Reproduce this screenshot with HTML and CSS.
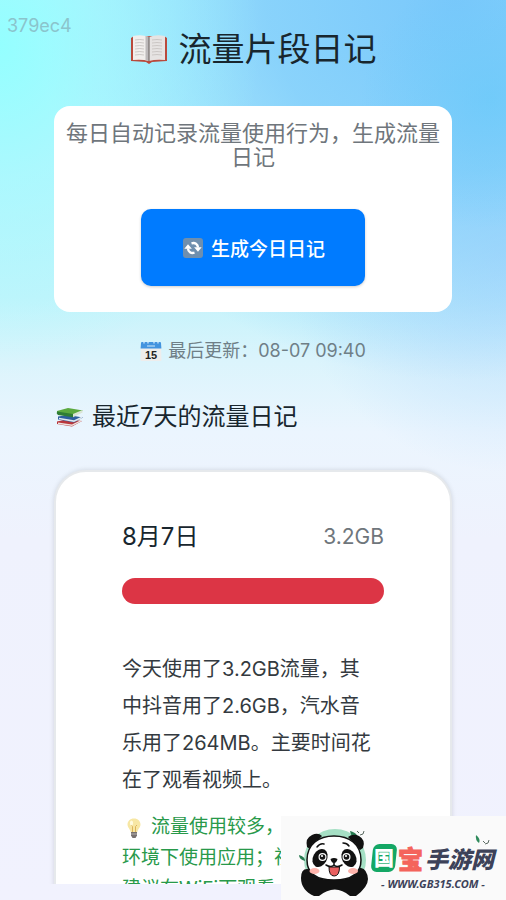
FILE: index.html
```html
<!DOCTYPE html>
<html lang="zh-CN">
<head>
<meta charset="utf-8">
<meta name="viewport" content="width=device-width, initial-scale=1">
<title>流量片段日记</title>
<link rel="stylesheet" href="styles.css">
</head>
<body>
<div class="app">
  <span class="build">379ec4</span>
  <main class="scroll">
    <h1 class="title">
      <svg class="icon-book" viewBox="0 0 38 30" aria-hidden="true">
        <path d="M1 4 4 2h30l3 2v23l-15 1-3 2-3-2-15-1z" fill="#b94a3c"/>
        <path d="M3 2q9-2 16 1v24q-7-2-16-1z" fill="#f1eeec"/>
        <path d="M35 2q-9-2-16 1v24q7-2 16-1z" fill="#e6e3e2"/>
        <path d="M15.500 2 19 3v24l-3.500-.8z" fill="#bdb9ba"/>
        <path d="M19 3v24" stroke="#77706f" stroke-width="1.200"/>
        <path d="M5 6q5-1 9 0M5 9q5-1 9 0M5 12q5-1 9 0M5 15q5-1 9 0M5 18q5-1 9 0M5 21q5-1 9 0M22 6q5-1 10 0M22 9q5-1 10 0M22 12q5-1 10 0M22 15q5-1 10 0M22 18q5-1 10 0M22 21q5-1 10 0" fill="none" stroke="#c4bfbd" stroke-width=".8"/>
      </svg>
      流量片段日记
    </h1>
    <section class="intro">
      <p class="intro-text">每日自动记录流量使用行为，生成流量日记</p>
      <button class="generate" type="button">
        <svg class="icon-small" viewBox="0 0 20 20" aria-hidden="true">
          <rect width="20" height="20" rx="3" fill="#6f8fae"/>
          <path d="M5 10.500C5.200 14 8 15.700 11.500 14.700M15 9.500C14.800 6 12 4.300 8.500 5.300" fill="none" stroke="#fff" stroke-width="2.400"/>
          <path d="M1.300 10.800 5 6.300l3.900 4.500zM18.700 9.200 15 13.700l-3.900-4.500z" fill="#fff"/>
        </svg>
        生成今日日记
      </button>
    </section>
    <p class="updated">
      <svg class="icon-calendar" viewBox="0 0 22 20" aria-hidden="true">
        <path d="M1 5h20l.5 14q0 1-1 1h-19q-1 0-1-1z" fill="#eeedec"/>
        <path d="M1 2q0-1 1-1h18q1 0 1 1l.4 5.500H.6z" fill="#4394df"/>
        <path d="M4 0v2.500M8 0v2.500M14 0v2.500M18 0v2.500" stroke="#d9efff" stroke-width="1.200"/>
        <path d="M7 5h8" stroke="#a9d2f3" stroke-width="1.400"/>
        <text x="11" y="17.500" text-anchor="middle" class="calendar-day">15</text>
      </svg>
      最后更新：08-07 09:40
    </p>
    <h2 class="section-title">
      <svg class="icon-books" viewBox="0 0 28 20" aria-hidden="true">
        <path d="M1 14.500 12 12l14 2-10 5.500L1 17z" fill="#b8373d"/>
        <path d="m2 15.500 14 2 9-4.500v1.500l-9 4.500-14-2z" fill="#eee4df"/>
        <path d="M2 9.500 12 8l15 2.500-9 5L2 12.500z" fill="#2d5f9e"/>
        <path d="m3 10.800 15 2.500 8-3.800v1.700l-8 3.800-15-2.700z" fill="#dfe8ef"/>
        <path d="M1 4 12 1l15 2.500-10 5.300L1 6.500z" fill="#5ba93f"/>
        <path d="M1 4.500 17 7v3.300L2 8q-2-1.500-1-3.500z" fill="#2f7d35"/>
        <path d="m17 7 9.500-4v2.500L17 10.300z" fill="#dae4d4"/>
      </svg>
      最近7天的流量日记
    </h2>
    <article class="diary">
      <header class="diary-head">
        <h3 class="diary-date">8月7日</h3>
        <span class="diary-total">3.2GB</span>
      </header>
      <div class="usage" role="progressbar" aria-label="流量" aria-valuenow="100" aria-valuemin="0" aria-valuemax="100"><div class="usage-fill" style="width:100%"></div></div>
      <p class="diary-text">今天使用了3.2GB流量，其中抖音用了2.6GB，汽水音乐用了264MB。主要时间花在了观看视频上。</p>
      <p class="advice"><svg class="icon-bulb" viewBox="0 0 24 20" aria-hidden="true">
        <path d="M12 .5c-4 0-6.500 2.700-6.500 6 0 3 2.800 4.500 3.300 8h6.400c.5-3.500 3.300-5 3.300-8 0-3.300-2.500-6-6.500-6z" fill="#f7e7a4"/>
        <path d="M10.500 14V8.500L9 7m4.500 7V8.500L15 7" fill="none" stroke="#dcb45b"/>
        <ellipse cx="9.500" cy="5" rx="1.600" ry="2.500" fill="#fffbe0"/>
        <path d="M9 14h6v3.500L13.500 20h-3L9 17.500z" fill="#77716f"/>
        <path d="M9 16h6" stroke="#b7b2af"/>
      </svg>流量使用较多，建议在WiFi环境下使用应用；视频类应用建议在WiFi下观看</p>
    </article>
  </main>
  <aside class="brand">
    <svg class="panda" viewBox="0 0 70 70" aria-hidden="true">
      <circle cx="35" cy="34" r="31" fill="#a5dfc4"/>
      <path d="M5 35c-4-1-6-3-6-6 4 1 6 3 6 6zM59 14c-5-1-8-4-9-9 5 1 8 4 9 9z" fill="#277a50"/>
      <path d="M64 5q0 4-4 4M57 5l2 2" fill="none" stroke="#5b6b62"/>
      <path d="M7 21Q5 12 12 9q6-3 10 1L10 23zM63 22q3-8-4-12-6-3-11 1l12 13z" fill="#111"/>
      <path d="M1 52q0-9 6-9 5 0 7 5h41q1-7 6-6 6 1 7 11 0 8-12 17H14Q1 64 1 52z" fill="#111"/>
      <path d="M19 70q16-13 31 0z" fill="#fafafa"/>
      <path d="M7 34C7 18 19 10 34 10s27 8 27 24-12 20-27 20S7 50 7 34z" fill="#fff" stroke="#111" stroke-width="1.500"/>
      <path d="M17 21q3-4 7-3M43 17q4 0 6 3" fill="none" stroke="#111" stroke-width="1.500" stroke-linecap="round"/>
      <ellipse cx="20" cy="32" rx="7" ry="9.500" transform="rotate(28 20 32)" fill="#111"/>
      <ellipse cx="49" cy="32" rx="7" ry="9.500" transform="rotate(-28 49 32)" fill="#111"/>
      <circle cx="22.500" cy="31" r="4" fill="#fff"/><circle cx="46.500" cy="31" r="4" fill="#fff"/>
      <circle cx="22.500" cy="31" r="2.800" fill="#161616"/><circle cx="46.500" cy="31" r="2.800" fill="#161616"/>
      <circle cx="22" cy="30" r="1.100" fill="#fff"/><circle cx="46" cy="30" r="1.100" fill="#fff"/>
      <ellipse cx="14.500" cy="45" rx="5" ry="3" fill="#ffb4ac"/><ellipse cx="53" cy="45" rx="5" ry="3" fill="#ffb4ac"/>
      <path d="M30.500 33q3.500-2 7 0-1 4-3.500 4t-3.500-4z" fill="#111"/>
      <path d="M34 37v2M26 39q5 3 8 0 3 3 8 0" fill="none" stroke="#111" stroke-width="1.500" stroke-linecap="round"/>
      <path d="M29 41h10.500q0 9-5.300 9T29 41z" fill="#e95f5f" stroke="#111"/>
    </svg>
    <div class="brand-text">
      <svg class="leaves" viewBox="0 0 16 12" aria-hidden="true">
        <path d="M2 1q5 4 3 8Q1 6 2 1z" fill="#2e8a5b"/>
        <path d="M15 6q0 4-4 4M9 7l2 2" fill="none" stroke="#5b6b62"/>
      </svg>
      <strong class="brand-name"><span class="seal">国</span><span class="red">宝</span><span class="dark">手游网</span></strong>
      <span class="brand-url">- WWW.GB315.COM -</span>
    </div>
  </aside>
</div>
</body>
</html>
```
FILE: styles.css
```css
* { box-sizing: border-box; }

body, h1, h2, h3, p { margin: 0; font-weight: 400; }

body {
  font-family: Inter, "Noto Sans CJK SC", sans-serif;
  color: #18262e;
}

.app {
  position: relative;
  height: 100vh;
  padding-bottom: 16px;
  overflow: hidden;
  background:
    radial-gradient(ellipse 130px 130px at 97% 11%, #68c9f9aa 0%, #68c9f900 100%),
    radial-gradient(ellipse 260px 330px at 0% 5%, #94ffff 0%, #a0fcff99 40%, #b8f7ff00 100%),
    radial-gradient(ellipse 420px 380px at 90% 0%, #7ac8fb 0%, #7ecbfbcc 45%, #a8dcfd00 100%),
    radial-gradient(ellipse 220px 220px at 100% 28%, #b4dafdcc 0%, #c3dffc00 100%),
    linear-gradient(#b2f1fd 0%, #c4f3fb 33%, #dbf4fc 40%, #ebf5fe 48%, #eff2fd 60%, #f1f2fe 100%);
}

.build {
  position: absolute;
  top: 12px;
  left: 7px;
  font-size: 18px;
  line-height: 28px;
  color: #8bc4cc;
}

.scroll {
  height: 100%;
  padding: 25px 54px 0;
  overflow: hidden;
}

.title {
  display: flex;
  align-items: center;
  justify-content: center;
  gap: 11px;
  font-size: 33px;
  line-height: 48px;
}

.icon-book { width: 38px; height: 30px; }

.intro {
  display: flex;
  flex-direction: column;
  align-items: center;
  margin-top: 33px;
  padding: 15px 10px 26px;
  border-radius: 16px;
  background: #fff;
}

.intro-text {
  font-size: 22px;
  line-height: 24px;
  text-align: center;
  color: #6f767c;
}

.generate {
  display: flex;
  align-items: center;
  gap: 8px;
  margin-top: 40px;
  padding: 24px 40px 24px 42px;
  border: 0;
  border-radius: 10px;
  background: #007bff;
  box-shadow: 0 1px 3px #0003;
  color: #fff;
  font: 500 19px/29px "Noto Sans CJK SC", sans-serif;
}

.icon-small { width: 20px; height: 20px; }

.updated {
  display: flex;
  align-items: center;
  justify-content: center;
  gap: 6px;
  margin-top: 25px;
  font-size: 18px;
  line-height: 28px;
  color: #6f7f87;
}

.icon-calendar { width: 22px; height: 20px; }

.calendar-day { font: 700 11px "Liberation Sans", sans-serif; fill: #222; }

.section-title {
  display: flex;
  align-items: center;
  gap: 8px;
  margin-top: 34px;
  padding-left: 2px;
  font-size: 24px;
  line-height: 36px;
}

.icon-books { width: 28px; height: 20px; }

.diary {
  margin-top: 35px;
  padding: 47px 66px;
  border: 2px solid #e6e9ec;
  border-radius: 32px;
  background: #fff;
  box-shadow: 0 0 5px #0002;
}

.diary-head {
  display: flex;
  align-items: center;
  justify-content: space-between;
}

.diary-date { font-size: 24px; line-height: 36px; }

.diary-total { font-size: 21px; line-height: 36px; color: #6f767c; }

.usage {
  height: 26px;
  margin-top: 23px;
  border-radius: 13px;
  overflow: hidden;
  background: #e9ecef;
}

.usage-fill { height: 100%; background: #dc3545; }

.diary-text {
  margin-top: 47px;
  padding-right: 8px;
  font-size: 20px;
  line-height: 37px;
  color: #343a40;
}

.advice {
  margin-top: 12px;
  font-size: 19px;
  line-height: 31px;
  color: #28994a;
}

.icon-bulb {
  width: 24px;
  height: 20px;
  margin-right: 5px;
  vertical-align: middle;
}

.brand {
  position: absolute;
  right: 0;
  bottom: 0;
  display: flex;
  width: 225px;
  height: 84px;
  padding: 10px 10px 0 19px;
  background: #fafafa;
}

.panda { flex: none; width: 70px; height: 70px; overflow: visible; }

.brand-text {
  position: relative;
  display: flex;
  flex: 1;
  flex-direction: column;
  align-items: center;
  padding-top: 14px;
}

.leaves {
  position: absolute;
  top: 8px;
  right: 6px;
  width: 16px;
  height: 12px;
}

.brand-name {
  display: flex;
  align-items: center;
  gap: 2px;
  font-family: "Noto Sans CJK SC", sans-serif;
  font-size: 23px;
  font-weight: 900;
  line-height: 36px;
  white-space: nowrap;
}

.seal {
  position: relative;
  z-index: 0;
  width: 24px;
  font-size: 20px;
  text-align: center;
  color: #fff;
}

.seal::before {
  content: "";
  position: absolute;
  z-index: -1;
  inset: 4px 0;
  border-radius: 6px;
  background: #14a765;
  transform: skewX(-6deg);
}

.red { font-size: 25px; color: #f4645c; -webkit-text-stroke: 1px #f4645c; }
.dark { font-style: italic; color: #3d4259; }

.brand-url {
  font: italic 700 11px/16px "Noto Sans", sans-serif;
  color: #3d4259;
  white-space: nowrap;
}
```
